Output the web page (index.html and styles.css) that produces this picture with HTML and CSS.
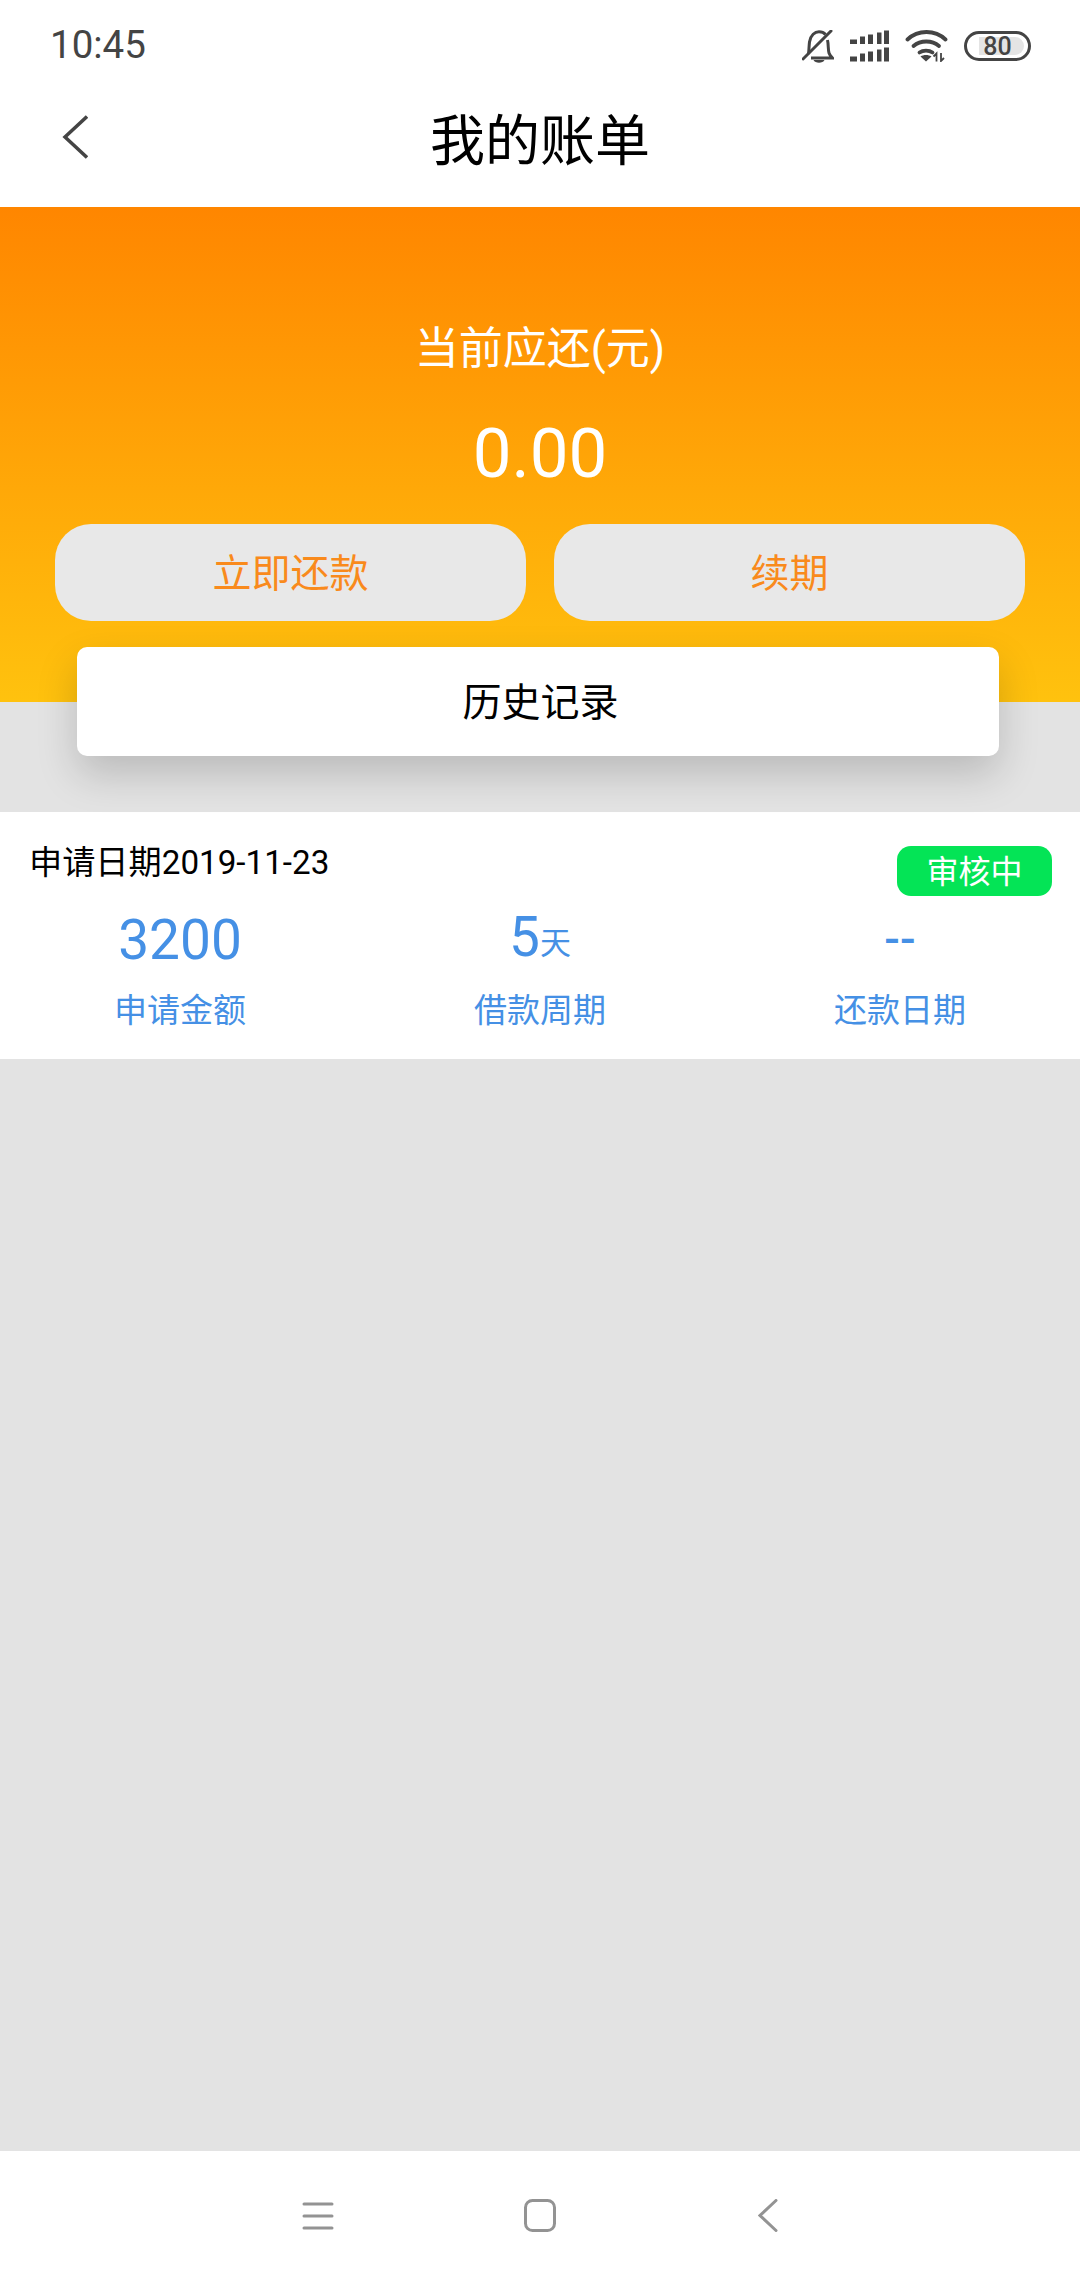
FILE: index.html
```html
<!DOCTYPE html>
<html lang="zh-CN">
<head>
<meta charset="utf-8">
<title>我的账单</title>
<link rel="stylesheet" href="styles.css">
</head>
<body>
<div class="app">
  <header class="top">
    <div class="status">
      <span class="time">10:45</span>
      <div class="status-icons">
        <svg class="ic-bell" width="32" height="33" viewBox="0 0 32 33" fill="none" stroke="#444" stroke-width="3">
          <path d="M6.500 24C7 20 7 16 7.500 12C8.500 5 13 1.800 17 1.800C20 1.800 22 2.800 23.500 4.500"/>
          <path d="M25.500 10C26.500 14 26 20 27 23C27.600 25 29 26.500 30.500 28H9"/>
          <path d="M1 29L29 1" stroke-linecap="round"/>
          <path d="M11.500 30H22.500C21 33.500 13 33.500 11.500 30Z" fill="#444" stroke="none"/>
        </svg>
        <svg class="ic-signal" width="41" height="32" viewBox="0 0 41 32" fill="#444">
          <path d="M1 9.500h7v4.500H1zM11 6.500h5v7.500h-5zM19 4.500h5v9.500h-5zM28 2.500h4.500v11.500H28zM35 0.500h5v13.500h-5z"/>
          <path d="M1 26.500h7v5H1zM11 23.500h5v8h-5zM19 21.500h5v10h-5zM28 19.500h4.500v12H28zM35 17.500h5v14h-5z"/>
        </svg>
        <svg class="ic-wifi" width="43" height="32" viewBox="0 0 43 32" fill="none" stroke="#444" stroke-width="3.800" stroke-linecap="round">
          <path d="M2.500 9.500C13 -0.500 30 -0.500 40.500 9.500"/>
          <path d="M8.500 16C15.500 10 27 10 34 16"/>
          <path d="M14.500 22.500C18 20 24 20 27.500 22.500"/>
          <path d="M21 31.500L15.500 26.500C18.500 24.500 23.500 24.500 26.500 26.500Z" fill="#444" stroke="none"/>
          <path d="M31.500 31.500V23.500L28.500 26.500M36 23V31L39 28" stroke-width="1.800" stroke-linecap="butt"/>
        </svg>
        <div class="battery"><span class="battery-fill"></span><span class="battery-num">80</span></div>
      </div>
    </div>
    <nav class="navbar">
      <svg class="ic-back" width="26" height="44" viewBox="0 0 26 44" fill="none" stroke="#444" stroke-width="3.500">
        <path d="M25 1.500L3 22L25 42.500"/>
      </svg>
      <h1 class="title">我的账单</h1>
    </nav>
  </header>

  <section class="hero">
    <p class="hero-label">当前应还(元)</p>
    <p class="hero-amount">0.00</p>
    <div class="hero-actions">
      <button class="btn">立即还款</button>
      <button class="btn">续期</button>
    </div>
    <div class="history">历史记录</div>
  </section>

  <main class="content">
    <article class="bill">
      <div class="bill-head">
        <span class="bill-date">申请日期2019-11-23</span>
        <span class="badge">审核中</span>
      </div>
      <div class="bill-stats">
        <div class="stat">
          <div class="stat-value">3200</div>
          <div class="stat-label">申请金额</div>
        </div>
        <div class="stat">
          <div class="stat-value stat-days">5<small class="unit">天</small></div>
          <div class="stat-label">借款周期</div>
        </div>
        <div class="stat">
          <div class="stat-value stat-dash">--</div>
          <div class="stat-label">还款日期</div>
        </div>
      </div>
    </article>
  </main>

  <footer class="sysnav">
    <svg width="32" height="28" viewBox="0 0 32 28" fill="none" stroke="#939393" stroke-width="3" stroke-linecap="round">
      <path d="M2 2H30M2 14H30M2 26H30"/>
    </svg>
    <svg class="ic-home" width="32" height="33" viewBox="0 0 32 33" fill="none" stroke="#939393" stroke-width="3">
      <rect x="1.500" y="1.500" width="29" height="30" rx="7"/>
    </svg>
    <svg width="20" height="33" viewBox="0 0 20 33" fill="none" stroke="#939393" stroke-width="3" stroke-linecap="round">
      <path d="M18 1.500L2 16.500L18 31.500"/>
    </svg>
  </footer>
</div>
</body>
</html>
```
FILE: styles.css
```css
* { box-sizing: border-box; }
html, body { margin: 0; padding: 0; }
body {
  width: 1080px;
  height: 2280px;
  font-family: Roboto, "Noto Sans CJK SC", sans-serif;
  background: #e3e3e3;
  overflow: hidden;
}
.app { display: flex; flex-direction: column; height: 2280px; }

.top { background: #fff; height: 207px; flex: none; }
.status {
  height: 92px;
  padding: 0 49px 0 50px;
  display: flex;
  justify-content: space-between;
  align-items: center;
}
.time { font-size: 38.500px; line-height: 44px; margin-top: -2px; color: #444; }
.status-icons { display: flex; align-items: center; }
.ic-bell { margin-right: 15px; }
.ic-signal { margin-right: 15px; }
.ic-wifi { margin-right: 16px; }
.battery {
  width: 67px;
  height: 30px;
  border: 3.5px solid #444;
  border-radius: 15px;
  display: flex;
  align-items: center;
  justify-content: center;
  position: relative;
}
.battery-fill {
  position: absolute;
  left: 12px;
  top: 2.500px;
  width: 45px;
  height: 18px;
  background: #e4e4e4;
  border-radius: 0 9px 9px 0;
}
.battery-num { position: relative; font-size: 25px; font-weight: 500; color: #444; line-height: 1; }

.navbar {
  height: 115px;
  display: flex;
  align-items: center;
  justify-content: center;
  position: relative;
}
.ic-back { position: absolute; left: 62px; top: 23px; }
.title { margin: 0; font-size: 55px; font-weight: 400; color: #000; position: relative; top: -14px; }

.hero {
  flex: none;
  height: 495px;
  background: linear-gradient(180deg, #ff8600 0%, #ffc20e 100%);
  padding-top: 112px;
  display: flex;
  flex-direction: column;
  align-items: center;
}
.hero-label { margin: 0; font-size: 44px; line-height: 60px; color: #fff; }
.hero-amount { margin: 30px 0 0; font-size: 69px; line-height: 90px; color: #fff; }
.hero-actions {
  margin-top: 25px;
  width: 100%;
  padding: 0 55px 0 55px;
  display: flex;
  gap: 28px;
}
.btn {
  flex: 1;
  height: 97px;
  padding: 0 0 5px;
  border: 0;
  border-radius: 36px;
  background: #e8e8e8;
  color: #f98a1c;
  font: inherit;
  font-size: 39px;
}
.history {
  margin-top: 26px;
  width: 922px;
  height: 109px;
  flex: none;
  padding: 0 0 5px 5px;
  background: #fff;
  border-radius: 10px;
  box-shadow: 0 18px 40px rgba(0, 0, 0, 0.18);
  color: #000;
  font-size: 39px;
  display: flex;
  align-items: center;
  justify-content: center;
  position: relative;
  left: -2px;
}

.content { flex: 1; padding-top: 110px; }
.bill { background: #fff; height: 247px; padding: 34px 28px 0 29px; }
.bill-head { display: flex; justify-content: space-between; align-items: flex-start; }
.bill-date { font-size: 33.200px; line-height: 44px; color: #000; position: relative; top: -5px; }
.badge {
  width: 155px;
  height: 50px;
  padding-bottom: 4px;
  border-radius: 14px;
  background: #04e456;
  color: #fff;
  font-size: 32px;
  display: flex;
  align-items: center;
  justify-content: center;
}
.bill-stats {
  display: grid;
  grid-template-columns: repeat(3, 360px);
  margin: 11px -28px 0 -29px;
}
.stat { text-align: center; color: #4590e5; }
.stat-value { font-size: 55px; line-height: 66px; height: 66px; }
.stat-days { position: relative; top: -3px; }
.unit { font-size: 31px; position: relative; top: -2px; }
.stat-dash { font-size: 46px; font-weight: 500; position: relative; top: -1px; }
.stat-label { margin-top: 18px; font-size: 33px; line-height: 40px; }

.sysnav {
  flex: none;
  height: 129px;
  background: #fff;
  display: flex;
  align-items: center;
  justify-content: center;
}
.ic-home { margin: 0 202px 0 190px; }
```
